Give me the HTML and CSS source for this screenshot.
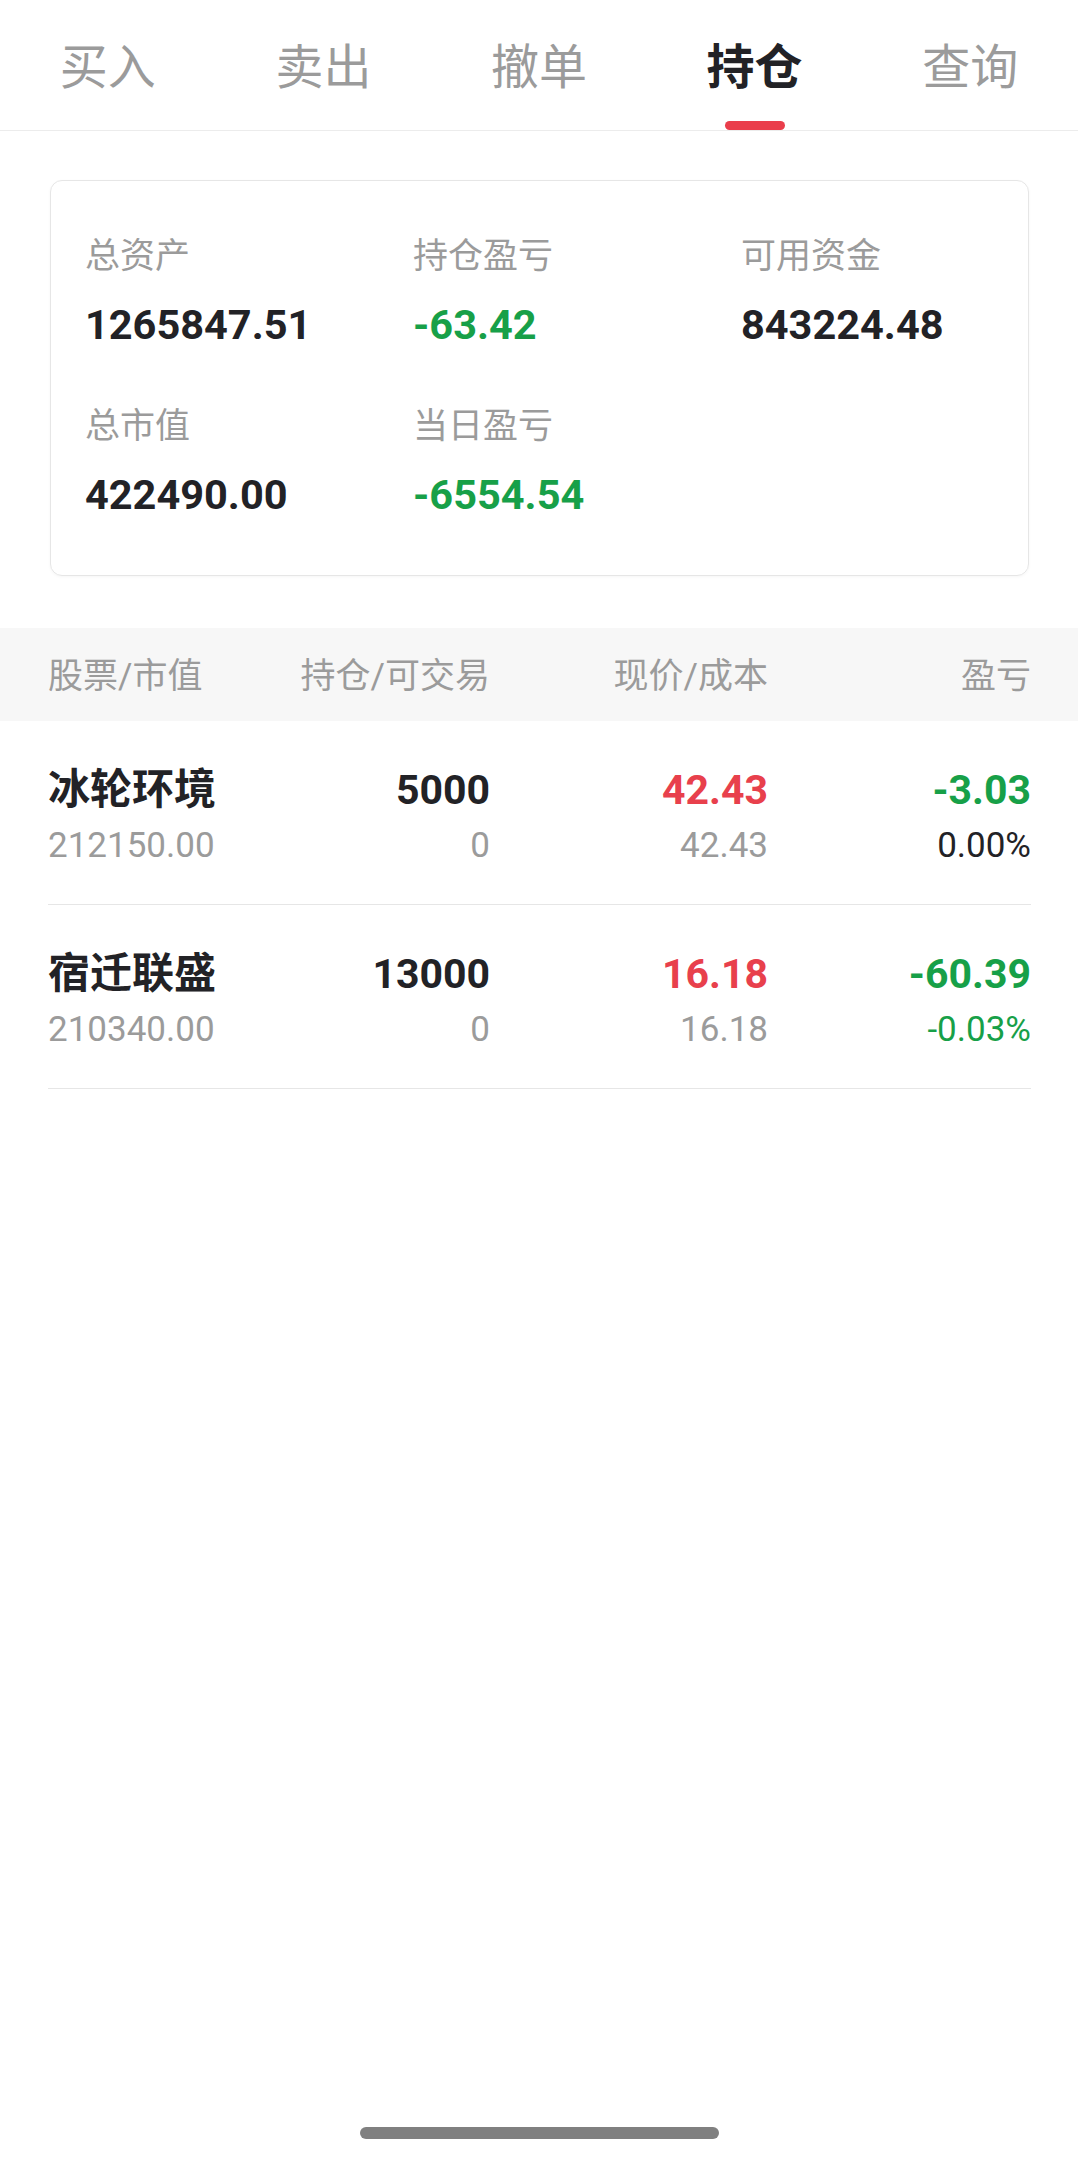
FILE: index.html
```html
<!DOCTYPE html>
<html lang="zh-CN">
<head>
<meta charset="utf-8">
<title>持仓</title>
<link rel="stylesheet" href="styles.css">
</head>
<body>
<div class="page">
  <nav class="tabs">
    <div class="tab"><span class="tab-text">买入</span><span class="tab-bar"></span></div>
    <div class="tab"><span class="tab-text">卖出</span><span class="tab-bar"></span></div>
    <div class="tab"><span class="tab-text">撤单</span><span class="tab-bar"></span></div>
    <div class="tab active"><span class="tab-text">持仓</span><span class="tab-bar"></span></div>
    <div class="tab"><span class="tab-text">查询</span><span class="tab-bar"></span></div>
  </nav>

  <section class="card">
    <div class="stat"><div class="stat-label">总资产</div><div class="stat-value">1265847.51</div></div>
    <div class="stat"><div class="stat-label">持仓盈亏</div><div class="stat-value green">-63.42</div></div>
    <div class="stat"><div class="stat-label">可用资金</div><div class="stat-value">843224.48</div></div>
    <div class="stat"><div class="stat-label">总市值</div><div class="stat-value">422490.00</div></div>
    <div class="stat"><div class="stat-label">当日盈亏</div><div class="stat-value green">-6554.54</div></div>
  </section>

  <div class="thead">
    <div class="cell left">股票/市值</div>
    <div class="cell">持仓/可交易</div>
    <div class="cell">现价/成本</div>
    <div class="cell">盈亏</div>
  </div>

  <div class="tbody">
    <div class="row">
      <div class="cell left"><div class="p name">冰轮环境</div><div class="s">212150.00</div></div>
      <div class="cell"><div class="p">5000</div><div class="s">0</div></div>
      <div class="cell"><div class="p red">42.43</div><div class="s">42.43</div></div>
      <div class="cell"><div class="p green">-3.03</div><div class="s dark">0.00%</div></div>
    </div>
    <div class="row">
      <div class="cell left"><div class="p name">宿迁联盛</div><div class="s">210340.00</div></div>
      <div class="cell"><div class="p">13000</div><div class="s">0</div></div>
      <div class="cell"><div class="p red">16.18</div><div class="s">16.18</div></div>
      <div class="cell"><div class="p green">-60.39</div><div class="s green">-0.03%</div></div>
    </div>
  </div>

  <div class="spacer"></div>
  <div class="home-bar"></div>
</div>
</body>
</html>
```

FILE: styles.css
```css
* { box-sizing: border-box; }
html, body { margin: 0; padding: 0; background: #fff; }
body {
  font-family: Roboto, "Noto Sans CJK SC", sans-serif;
  color: #222226;
}
.page {
  width: 1078px;
  height: 2160px;
  display: flex;
  flex-direction: column;
}

/* tabs */
.tabs {
  display: flex;
  height: 131px;
  border-bottom: 1px solid #ececec;
}
.tab {
  flex: 1;
  display: flex;
  flex-direction: column;
  align-items: center;
  padding-top: 39px;
}
.tab-text {
  font-family: "Noto Sans CJK SC", sans-serif;
  font-size: 48px;
  line-height: 48px;
  color: #9b9b9b;
}
.tab-bar {
  margin-top: auto;
  width: 60px;
  height: 9px;
  border-radius: 5px;
  background: transparent;
}
.tab.active .tab-text { color: #222226; font-weight: 700; }
.tab.active .tab-bar { background: #ea3e4b; }

/* card */
.card {
  margin: 49px 49px 0 50px;
  border: 1px solid #e6e6e6;
  border-radius: 12px;
  box-shadow: 0 1px 3px rgba(0, 0, 0, 0.04);
  padding: 54px 0 60px 34px;
  display: grid;
  grid-template-columns: 328px 328px 1fr;
  row-gap: 60px;
}
.stat-label {
  font-family: "Noto Sans CJK SC", sans-serif;
  font-size: 35px;
  line-height: 35px;
  color: #9b9b9b;
}
.stat-value {
  margin-top: 35px;
  font-size: 41.5px;
  line-height: 40px;
  font-weight: 700;
  color: #222226;
}

/* table */
.thead {
  margin-top: 52px;
  height: 93px;
  background: #f7f7f7;
  display: grid;
  grid-template-columns: 250px 192px 278px 263px;
  padding: 0 47px 0 48px;
  align-items: center;
}
.thead .cell {
  font-size: 35px;
  line-height: 35px;
  color: #9b9b9b;
  text-align: right;
  white-space: nowrap;
  padding-top: 4px;
}
.thead .cell.left { text-align: left; }

.tbody { padding: 0 47px 0 48px; }
.row {
  display: grid;
  grid-template-columns: 250px 192px 278px 263px;
  padding: 46px 0 38px;
  border-bottom: 1px solid #e6e6e6;
}
.row .cell { text-align: right; white-space: nowrap; }
.row .cell.left { text-align: left; }
.p {
  font-size: 41px;
  line-height: 46px;
  font-weight: 700;
  color: #222226;
}
.p.name { font-size: 42px; }
.s {
  margin-top: 13px;
  font-size: 35px;
  line-height: 40px;
  color: #9b9b9b;
}
.s.dark { color: #222226; }
.red { color: #e8404c; }
.green { color: #17a048; }
.s.green { color: #17a048; }

.spacer { flex: 1; }
.home-bar {
  align-self: center;
  width: 359px;
  height: 12px;
  border-radius: 6px;
  background: #808080;
  margin-bottom: 21px;
}
```
